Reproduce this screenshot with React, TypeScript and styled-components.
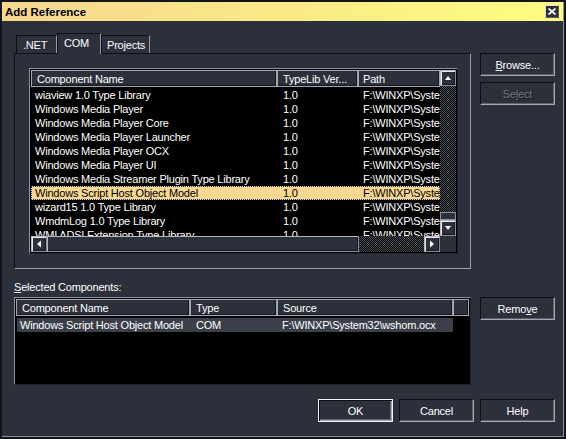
import React from "react";
import styled, { createGlobalStyle, css } from "styled-components";

const BG = "#2b303a";
const DARK = "#0c0f14";
const LIGHT = "#9a9ea6";

const Global = createGlobalStyle`
  html, body { margin: 0; padding: 0; background: ${BG}; }
  body {
    font-family: "Liberation Sans", Arial, sans-serif;
    font-size: 11px;
    letter-spacing: -0.2px;
    color: #fff;
  }
  * { box-sizing: border-box; }
`;

const Window = styled.div`
  width: 566px;
  height: 439px;
  background: ${BG};
  border: 2px solid #11141a;
  box-shadow: inset -1px -1px 0 #8e929a;
  display: flex;
  flex-direction: column;
  overflow: hidden;
`;

const TitleBar = styled.div`
  height: 19px;
  margin-right: 1px;
  background: linear-gradient(to right, #f5d68e, #fffd80);
  display: flex;
  align-items: center;
  justify-content: space-between;
  padding: 0 4px 0 3px;
`;

const TitleText = styled.span`
  color: #000;
  font-weight: bold;
  font-size: 11.5px;
  letter-spacing: 0;
`;

const CloseBox = styled.div`
  width: 14px;
  height: 13px;
  background: ${BG};
  border: 1px solid;
  border-color: #e4e4e4 #5a5e66 #5a5e66 #e4e4e4;
  display: flex;
  align-items: center;
  justify-content: center;
`;

const Body = styled.div`
  flex: 1;
  padding: 12px 9px 0 12px;
  display: flex;
  flex-direction: column;
`;

const TopSection = styled.div`
  display: flex;
  gap: 9px;
`;

const LeftCol = styled.div`
  width: 457px;
  display: flex;
  flex-direction: column;
`;

const RightCol = styled.div<{ $top: number }>`
  width: 75px;
  padding-top: ${(p) => p.$top}px;
  display: flex;
  flex-direction: column;
  gap: 6px;
`;

const TabStrip = styled.div`
  height: 20px;
  display: flex;
  align-items: flex-end;
  padding-left: 2px;
  position: relative;
  z-index: 1;
`;

const Tab = styled.div<{ $w: number; $active?: boolean; $pad: number }>`
  width: ${(p) => p.$w}px;
  height: ${(p) => (p.$active ? 21 : 18)}px;
  margin-bottom: ${(p) => (p.$active ? -1 : 0)}px;
  background: ${BG};
  border-top: 1px solid ${DARK};
  border-left: 1px solid ${DARK};
  border-right: 1px solid ${LIGHT};
  padding-left: ${(p) => p.$pad}px;
  padding-top: 3px;
  white-space: nowrap;
`;

const Panel = styled.div`
  height: 216px;
  border: 1px solid;
  border-color: ${DARK} ${LIGHT} ${LIGHT} ${DARK};
  padding: 14px 12px 14px 14px;
`;

const ListFrame = styled.div<{ $h: number }>`
  height: ${(p) => p.$h}px;
  border: 1px solid;
  border-color: #8e929a #20242c #20242c #8e929a;
  padding: 1px;
  background: #000;
`;

const ListGrid = styled.div`
  height: 100%;
  display: grid;
  grid-template-columns: 1fr 16px;
  grid-template-rows: 1fr 16px;
`;

const TableArea = styled.div`
  overflow: hidden;
  background: #000;
`;

const HeaderRow = styled.div<{ $cols: string; $h: number }>`
  display: grid;
  grid-template-columns: ${(p) => p.$cols};
  height: ${(p) => p.$h}px;
`;

const HeaderCell = styled.div<{ $pad: number }>`
  background: ${BG};
  border: 1px solid #a2a6ae;
  box-shadow: inset -1px -1px 0 #14171d;
  padding-left: ${(p) => p.$pad - 1}px;
  display: flex;
  align-items: center;
  white-space: nowrap;
  overflow: hidden;
`;

const Rows = styled.div<{ $top: number }>`
  padding-top: ${(p) => p.$top}px;
`;

const Row = styled.div<{ $cols: string; $sel?: boolean; $dim?: boolean }>`
  display: grid;
  grid-template-columns: ${(p) => p.$cols};
  height: 14px;
  line-height: 14px;
  color: #fff;
  ${(p) =>
    p.$sel &&
    css`
      background: #f7d792;
      color: #000;
      outline: 1px dotted #1d2c80;
      outline-offset: -1px;
    `}
  ${(p) =>
    p.$dim &&
    css`
      background: #3a3f4a;
      margin-left: 1px;
      width: 436px;
    `}
`;

const Cell = styled.div<{ $pad: number }>`
  padding-left: ${(p) => p.$pad}px;
  white-space: nowrap;
  overflow: hidden;
`;

const VScroll = styled.div`
  display: flex;
  flex-direction: column;
  background: ${BG};
`;

const HScroll = styled.div`
  display: flex;
  background: ${BG};
`;

const ScrollBtn = styled.div`
  width: 16px;
  height: 16px;
  flex: none;
  background: ${BG};
  border: 1px solid;
  border-color: #b4b8c0 #8a8e96 #8a8e96 #b4b8c0;
  box-shadow: inset 1px 1px 0 #e6e8ec, inset -1px -1px 0 #14171d;
  display: flex;
  align-items: center;
  justify-content: center;
`;

const Track = styled.div`
  flex: 1;
  background: repeating-conic-gradient(#4a4f58 0 25%, #000 0 50%) 0 0 / 2px 2px;
  display: flex;
  flex-direction: column;
  justify-content: flex-end;
`;

const VThumb = styled.div`
  height: 8px;
  background: ${BG};
  border: 1px solid #8a8e96;
`;

const HThumb = styled.div<{ $w: number }>`
  width: ${(p) => p.$w}px;
  flex: none;
  background: ${BG};
  border: 1px solid;
  border-color: #b4b8c0 #8a8e96 #8a8e96 #b4b8c0;
  box-shadow: inset -1px -1px 0 #14171d;
`;

const Corner = styled.div`
  background: ${BG};
`;

const Button = styled.button<{ $default?: boolean }>`
  width: 75px;
  height: 23px;
  flex: none;
  background: ${BG};
  color: ${(p) => (p.disabled ? "#747880" : "#fff")};
  font-family: inherit;
  font-size: 11px;
  letter-spacing: -0.2px;
  padding: 0;
  border: 1px solid;
  border-color: ${DARK} #a4a8b0 #a4a8b0 ${DARK};
  box-shadow: inset -1px -1px 0 #5e626a;
  text-shadow: ${(p) => (p.disabled ? "1px 1px 0 #15181e" : "none")};
  ${(p) =>
    p.$default &&
    css`
      border-color: #f4f4f4;
      box-shadow: inset 1px 1px 0 ${DARK}, inset -1px -1px 0 #a4a8b0, inset -2px -2px 0 #5e626a;
    `}
  cursor: default;
`;

const Label = styled.div`
  margin-top: 12px;
  height: 13px;
  line-height: 13px;
`;

const LowerRow = styled.div`
  margin-top: 3px;
  display: flex;
  gap: 9px;
`;

const BottomButtons = styled.div`
  margin-top: 14px;
  display: flex;
  justify-content: flex-end;
  gap: 6px;
`;

const U = styled.span`
  text-decoration: underline;
  text-underline-offset: 1px;
`;

const Arrow = ({ dir }: { dir: "up" | "down" | "left" | "right" }) => {
  const pts = {
    up: "4,1 7,5 1,5",
    down: "1,1 7,1 4,5",
    left: "5,0.5 5,7.5 1,4",
    right: "1,0.5 1,7.5 5,4",
  }[dir];
  const vertical = dir === "up" || dir === "down";
  return (
    <svg width={vertical ? 8 : 6} height={vertical ? 6 : 8} viewBox={vertical ? "0 0 8 6" : "0 0 6 8"}>
      <polygon points={pts} fill="#fff" />
    </svg>
  );
};

const MAIN_COLS = "246px 81px 82px";

const items: [string, string, string][] = [
  ["wiaview 1.0 Type Library", "1.0", "F:\\WINXP\\System32\\wiaview.dll"],
  ["Windows Media Player", "1.0", "F:\\WINXP\\System32\\msdxm.ocx"],
  ["Windows Media Player Core", "1.0", "F:\\WINXP\\System32\\wmp.dll"],
  ["Windows Media Player Launcher", "1.0", "F:\\WINXP\\System32\\wmplaunch.exe"],
  ["Windows Media Player OCX", "1.0", "F:\\WINXP\\System32\\wmp.ocx"],
  ["Windows Media Player UI", "1.0", "F:\\WINXP\\System32\\wmpui.dll"],
  ["Windows Media Streamer Plugin Type Library", "1.0", "F:\\WINXP\\System32\\wmsplugin.dll"],
  ["Windows Script Host Object Model", "1.0", "F:\\WINXP\\System32\\wshom.ocx"],
  ["wizard15 1.0 Type Library", "1.0", "F:\\WINXP\\System32\\wizard15.dll"],
  ["WmdmLog 1.0 Type Library", "1.0", "F:\\WINXP\\System32\\wmdmlog.dll"],
  ["WMI ADSI Extension Type Library", "1.0", "F:\\WINXP\\System32\\wmiadsi.dll"],
];

export default function App() {
  return (
    <>
      <Global />
      <Window>
        <TitleBar>
          <TitleText>Add Reference</TitleText>
          <CloseBox>
            <svg width="8" height="7" viewBox="0 0 8 7">
              <path d="M0.5 0.5 L7.5 6.5 M7.5 0.5 L0.5 6.5" stroke="#fff" strokeWidth="1.8" />
            </svg>
          </CloseBox>
        </TitleBar>
        <Body>
          <TopSection>
            <LeftCol>
              <TabStrip>
                <Tab $w={41} $pad={6}>.NET</Tab>
                <Tab $w={44} $pad={6} $active>COM</Tab>
                <Tab $w={49} $pad={5}>Projects</Tab>
              </TabStrip>
              <Panel>
                <ListFrame $h={186}>
                  <ListGrid>
                    <TableArea>
                      <HeaderRow $cols={MAIN_COLS} $h={17}>
                        <HeaderCell $pad={6}>Component Name</HeaderCell>
                        <HeaderCell $pad={6}>TypeLib Ver...</HeaderCell>
                        <HeaderCell $pad={5}>Path</HeaderCell>
                      </HeaderRow>
                      <Rows $top={1}>
                        {items.map(([n, v, p], i) => (
                          <Row key={n} $cols={MAIN_COLS} $sel={i === 7}>
                            <Cell $pad={4}>{n}</Cell>
                            <Cell $pad={6}>{v}</Cell>
                            <Cell $pad={5}>{p}</Cell>
                          </Row>
                        ))}
                      </Rows>
                    </TableArea>
                    <VScroll>
                      <ScrollBtn><Arrow dir="up" /></ScrollBtn>
                      <Track>
                        <VThumb />
                      </Track>
                      <ScrollBtn><Arrow dir="down" /></ScrollBtn>
                    </VScroll>
                    <HScroll>
                      <ScrollBtn><Arrow dir="left" /></ScrollBtn>
                      <HThumb $w={312} />
                      <Track />
                      <ScrollBtn><Arrow dir="right" /></ScrollBtn>
                    </HScroll>
                    <Corner />
                  </ListGrid>
                </ListFrame>
              </Panel>
            </LeftCol>
            <RightCol $top={20}>
              <Button><U>B</U>rowse...</Button>
              <Button disabled>Se<U>l</U>ect</Button>
            </RightCol>
          </TopSection>
          <Label><U>S</U>elected Components:</Label>
          <LowerRow>
            <LeftCol>
              <ListFrame $h={88}>
                <TableArea style={{ height: "100%" }}>
                  <HeaderRow $cols="174px 87px 176px 16px" $h={17}>
                    <HeaderCell $pad={6}>Component Name</HeaderCell>
                    <HeaderCell $pad={6}>Type</HeaderCell>
                    <HeaderCell $pad={6}>Source</HeaderCell>
                    <HeaderCell $pad={0} />
                  </HeaderRow>
                  <Rows $top={2}>
                    <Row $cols="173px 87px 176px" $dim>
                      <Cell $pad={3}>Windows Script Host Object Model</Cell>
                      <Cell $pad={6}>COM</Cell>
                      <Cell $pad={5}>F:\WINXP\System32\wshom.ocx</Cell>
                    </Row>
                  </Rows>
                </TableArea>
              </ListFrame>
            </LeftCol>
            <RightCol $top={0}>
              <Button>Remo<U>v</U>e</Button>
            </RightCol>
          </LowerRow>
          <BottomButtons>
            <Button $default>OK</Button>
            <Button>Cancel</Button>
            <Button>Help</Button>
          </BottomButtons>
        </Body>
      </Window>
    </>
  );
}
